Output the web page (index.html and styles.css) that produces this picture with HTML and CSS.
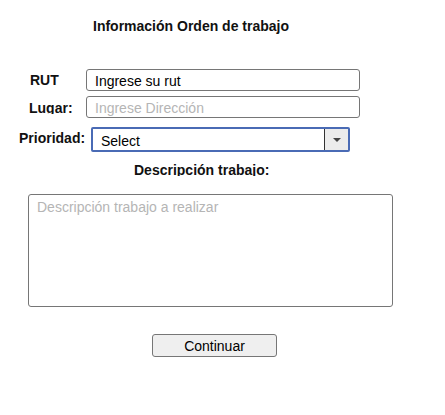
FILE: index.html
```html
<!DOCTYPE html>
<html lang="es">
<head>
<meta charset="utf-8">
<title>Orden de trabajo</title>
<link rel="stylesheet" href="styles.css">
</head>
<body>
<form class="form">
  <h1 class="title">Información Orden de trabajo</h1>
  <div class="row row-rut">
    <label class="label label-rut" for="rut">RUT</label>
    <input class="field field-rut" id="rut" type="text" value="Ingrese su rut">
  </div>
  <div class="row row-lugar">
    <label class="label clip label-lugar" for="lugar">Lugar:</label>
    <input class="field field-lugar" id="lugar" type="text" placeholder="Ingrese Dirección">
  </div>
  <div class="row row-prio">
    <label class="label label-prio">Prioridad:</label>
    <div class="select">
      <span class="select-text">Select</span>
      <span class="select-arrow"><span class="tri"></span></span>
    </div>
  </div>
  <div class="label clip label-desc">Descripción trabajo:</div>
  <textarea class="area" placeholder="Descripción trabajo a realizar"></textarea>
  <div class="actions">
    <button class="btn" type="button">Continuar</button>
  </div>
</form>
</body>
</html>
```

FILE: styles.css
```css
* { box-sizing: border-box; }
html, body { margin: 0; padding: 0; background: #fff; }
body {
  font-family: "Liberation Sans", Arial, sans-serif;
  color: #000;
  width: 445px;
  height: 415px;
  overflow: hidden;
}
.form { display: flex; flex-direction: column; align-items: flex-start; }
.title {
  margin: 18px 0 0 93px;
  font-size: 14px;
  font-weight: bold;
  line-height: 16px;
  color: #111;
}
.row { display: flex; align-items: center; }
.row-rut { margin-top: 35px; }
.row-lugar { margin-top: 5px; }
.row-prio { margin-top: 9px; }
.label {
  display: block;
  font-size: 14px;
  font-weight: bold;
  line-height: 16px;
  color: #111;
}
.clip { height: 14px; overflow: hidden; }
.label-rut { margin-left: 30px; width: 56px; }
.label-lugar { margin-left: 29px; width: 57px; }
.label-prio { margin-left: 19px; width: 72px; margin-top: -4px; }
.field {
  width: 274px;
  height: 22px;
  border: 1px solid #767676;
  border-radius: 3px;
  padding: 1px 8px 0;
  font-family: "Liberation Sans", Arial, sans-serif;
  font-size: 14px;
  color: #000;
  background: #fff;
  margin: 0;
  outline: none;
}
.field::placeholder { color: #b5b5b5; }
.select {
  display: flex;
  width: 259px;
  height: 25px;
  border: 2px solid #4a6bb5;
  border-radius: 2px;
  background: #fff;
}
.select-text {
  flex: 1;
  font-size: 14px;
  line-height: 22px;
  padding: 1px 0 0 8px;
}
.select-arrow {
  width: 24px;
  border-left: 1px solid #333;
  background: #ececec;
  display: flex;
  align-items: center;
  justify-content: center;
}
.tri {
  width: 0; height: 0;
  border-left: 4px solid transparent;
  border-right: 4px solid transparent;
  border-top: 4px solid #444;
  margin-top: 1px;
}
.label-desc { margin: 10px 0 0 134px; }
.area {
  margin: 18px 0 0 28px;
  width: 365px;
  height: 113px;
  border: 1px solid #767676;
  border-radius: 3px;
  padding: 4px 8px;
  font-family: "Liberation Sans", Arial, sans-serif;
  font-size: 14px;
  resize: none;
  outline: none;
}
.area::placeholder { color: #b5b5b5; }
.actions { margin: 27px 0 0 152px; }
.btn {
  width: 125px;
  height: 23px;
  border: 1px solid #767676;
  border-radius: 3px;
  background: #efefef;
  font-family: "Liberation Sans", Arial, sans-serif;
  font-size: 14px;
  color: #000;
  padding: 0;
}
```
